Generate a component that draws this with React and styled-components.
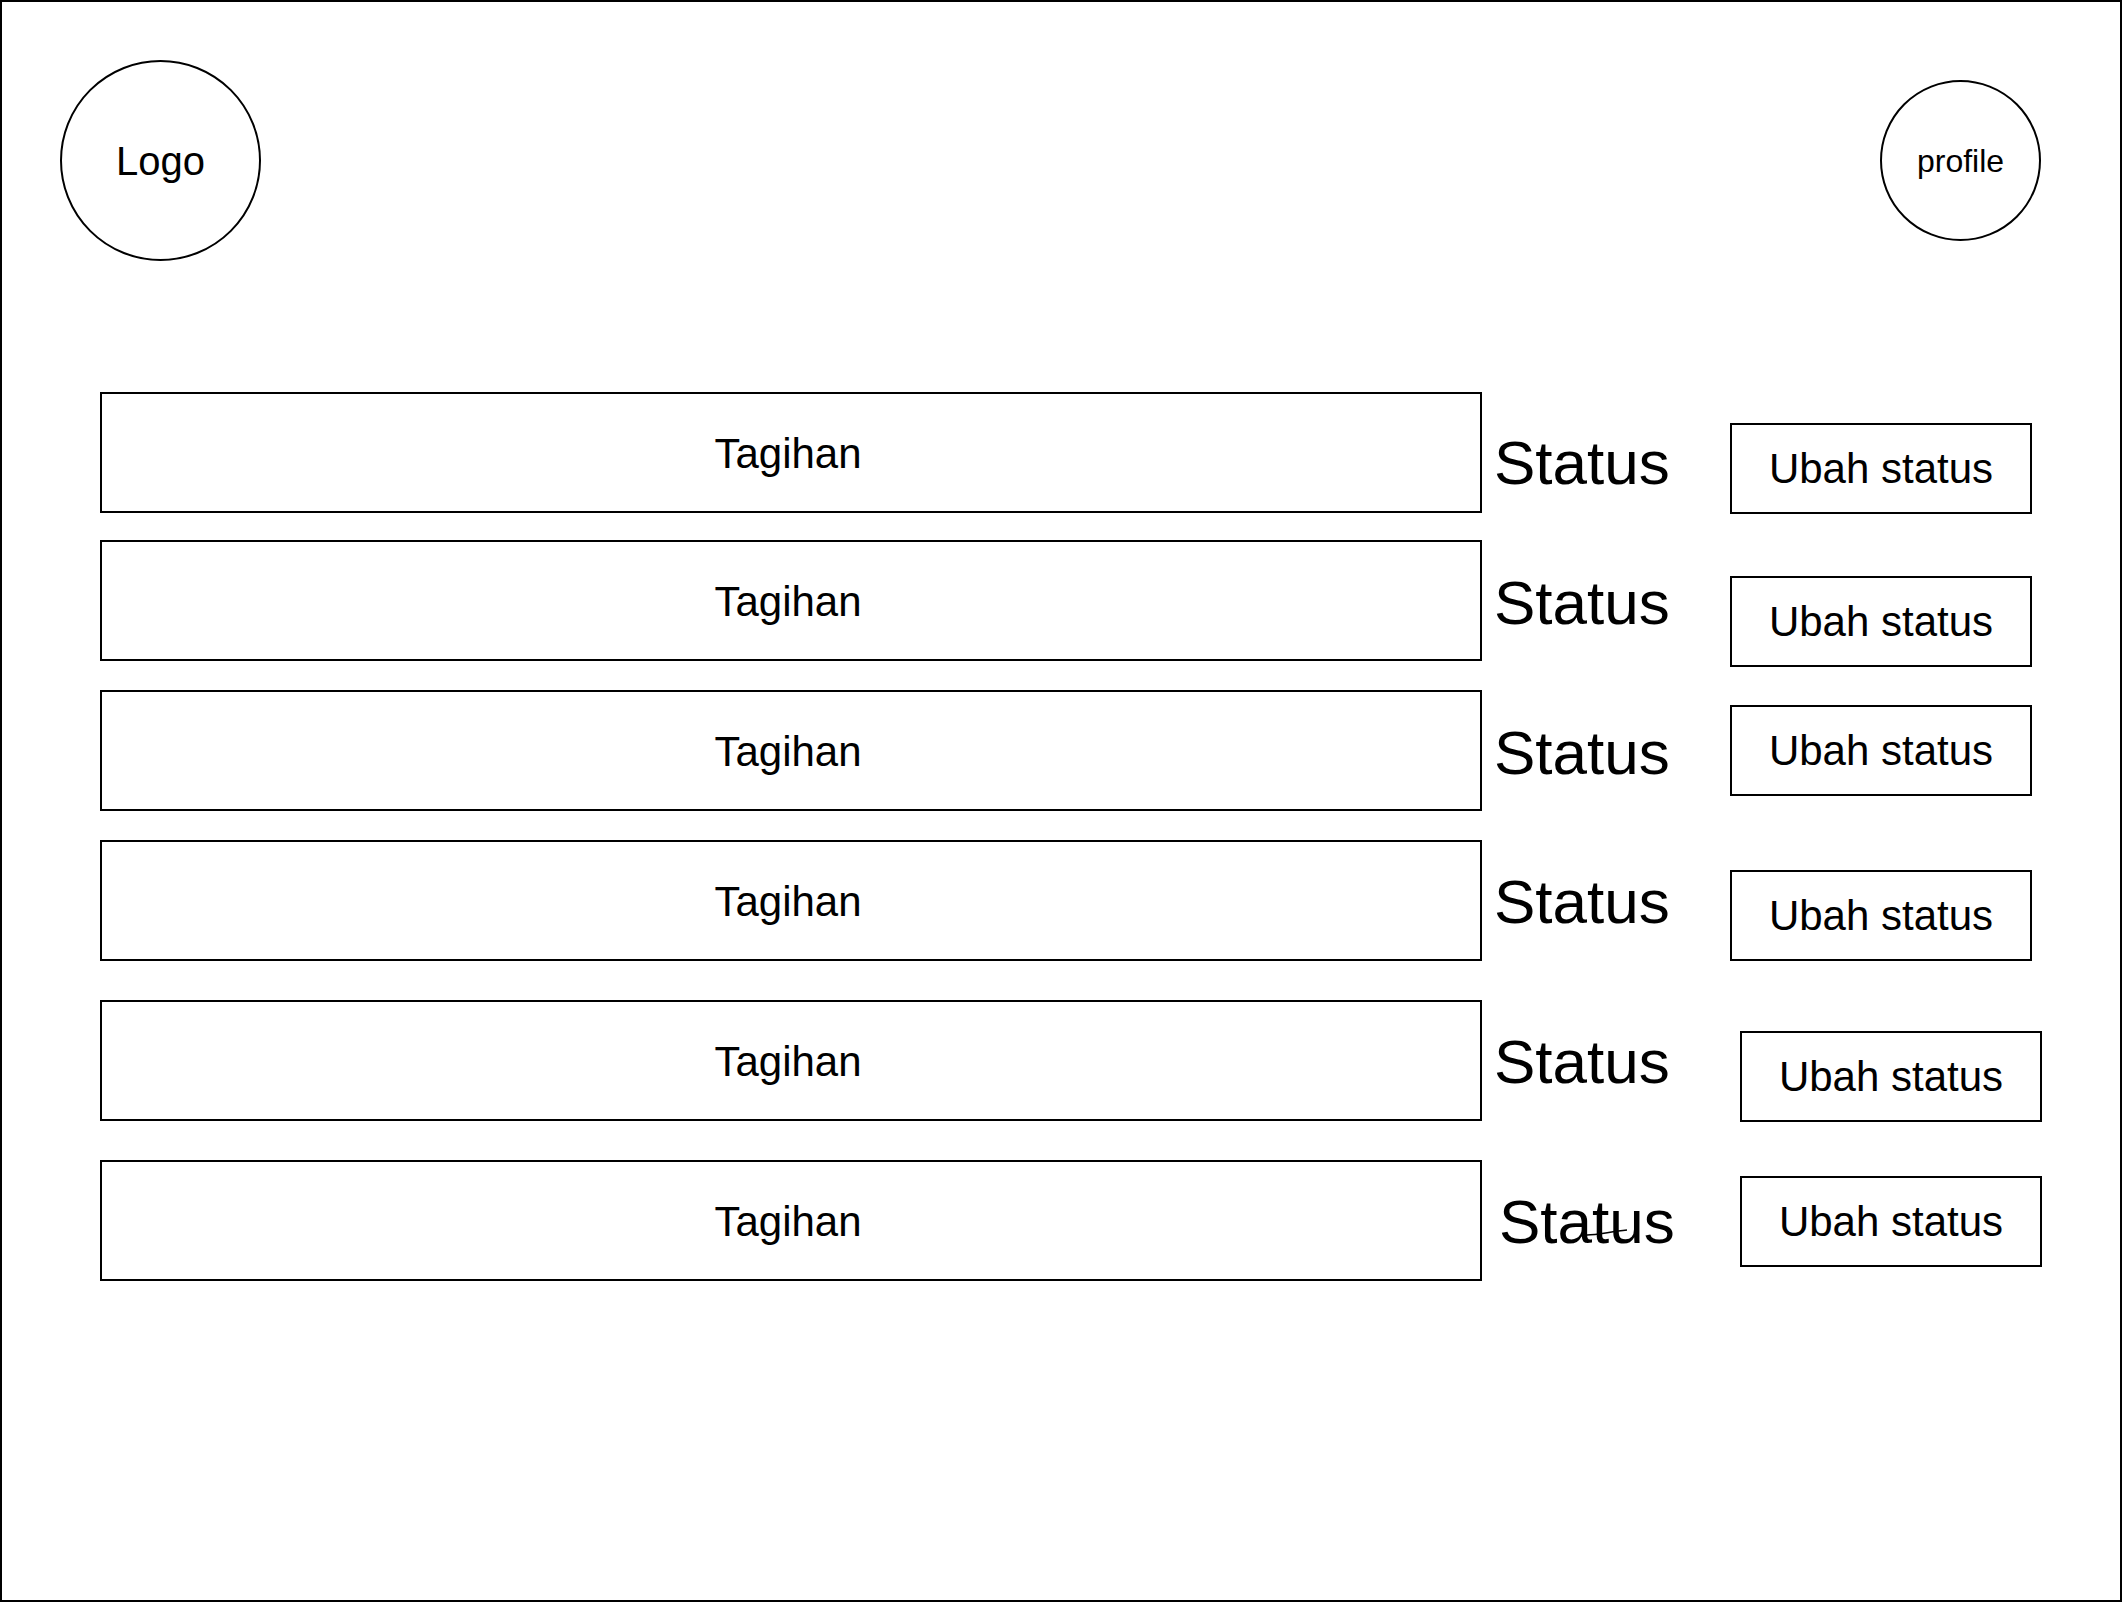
import React from 'react';
import styled, { createGlobalStyle } from 'styled-components';

const GlobalStyle = createGlobalStyle`
  html, body {
    margin: 0;
    padding: 0;
    background: #fff;
  }
  body {
    font-family: "Liberation Sans", Arial, sans-serif;
    color: #000;
  }
`;

const Frame = styled.div`
  box-sizing: border-box;
  width: 2122px;
  height: 1602px;
  border: 2px solid #000;
`;

const Header = styled.header`
  display: flex;
  justify-content: space-between;
  align-items: center;
  padding: 58px 79px 0 58px;
`;

const Circle = styled.div`
  box-sizing: border-box;
  width: ${(p) => p.$size}px;
  height: ${(p) => p.$size}px;
  border: 2px solid #000;
  border-radius: 50%;
  display: flex;
  align-items: center;
  justify-content: center;
  padding-top: 2px;
  font-size: ${(p) => p.$font}px;
`;

const List = styled.div`
  padding-left: 98px;
`;

const Row = styled.div`
  display: flex;
  align-items: flex-start;
  height: 121px;
  margin-top: ${(p) => p.$gap}px;
`;

const Tagihan = styled.div`
  box-sizing: border-box;
  flex-shrink: 0;
  width: 1382px;
  height: 121px;
  padding: 2px 6px 0 0;
  border: 2px solid #000;
  display: flex;
  align-items: center;
  justify-content: center;
  font-size: 42px;
`;

const StatusCell = styled.div`
  box-sizing: border-box;
  flex-shrink: 0;
  width: 248px;
  padding-left: ${(p) => 12 + p.$shift}px;
  margin-top: ${(p) => p.$top}px;
`;

const StatusText = styled.span`
  position: relative;
  display: inline-block;
  font-size: 62px;
  line-height: 1;
`;

const Scribble = styled.svg`
  position: absolute;
  left: 88px;
  top: 36px;
  overflow: visible;
`;

const UbahButton = styled.div`
  box-sizing: border-box;
  flex-shrink: 0;
  width: 302px;
  height: 91px;
  margin-top: ${(p) => p.$top}px;
  margin-left: ${(p) => p.$shift}px;
  border: 2px solid #000;
  display: flex;
  align-items: center;
  justify-content: center;
  font-size: 42px;
`;

const rows = [
  { gap: 131, statusTop: 40, statusShift: 0, btnTop: 31, btnShift: 0 },
  { gap: 27, statusTop: 32, statusShift: 0, btnTop: 36, btnShift: 0 },
  { gap: 29, statusTop: 32, statusShift: 0, btnTop: 15, btnShift: 0 },
  { gap: 29, statusTop: 31, statusShift: 0, btnTop: 30, btnShift: 0 },
  { gap: 39, statusTop: 31, statusShift: 0, btnTop: 31, btnShift: 10 },
  { gap: 39, statusTop: 31, statusShift: 5, btnTop: 16, btnShift: 10, scribble: true },
];

export default function App() {
  return (
    <>
      <GlobalStyle />
      <Frame>
        <Header>
          <Circle $size={201} $font={40}>Logo</Circle>
          <Circle $size={161} $font={32}>profile</Circle>
        </Header>
        <List>
          {rows.map((r, i) => (
            <Row key={i} $gap={r.gap}>
              <Tagihan>Tagihan</Tagihan>
              <StatusCell $top={r.statusTop} $shift={r.statusShift}>
                <StatusText>
                  Status
                  {r.scribble && (
                    <Scribble width="40" height="10" viewBox="0 0 40 10">
                      <path d="M0 8 C 10 8, 22 5, 40 3" fill="none" stroke="#000" strokeWidth="1.6" />
                    </Scribble>
                  )}
                </StatusText>
              </StatusCell>
              <UbahButton $top={r.btnTop} $shift={r.btnShift}>Ubah status</UbahButton>
            </Row>
          ))}
        </List>
      </Frame>
    </>
  );
}
